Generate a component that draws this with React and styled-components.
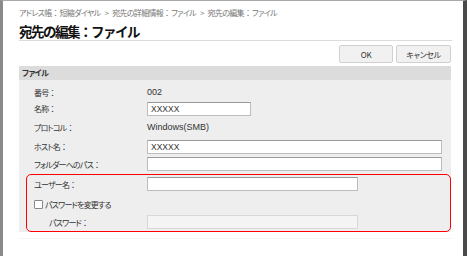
import React from 'react';
import styled, { createGlobalStyle } from 'styled-components';

const GlobalStyle = createGlobalStyle`
  body {
    margin: 0;
    background: #fff;
    font-family: "Noto Sans CJK JP", "Liberation Sans", sans-serif;
    color: #333;
  }
`;

const Frame = styled.div`
  position: relative;
  width: 467px;
  height: 256px;
  box-sizing: border-box;
  border-top: 1px solid #a8a8a8;
  border-left: 3px solid #8a8a8a;
  border-right: 4px solid #4a4a4a;
  overflow: hidden;
  background: #fff;
`;

const Fade = styled.div`
  position: absolute;
  left: -3px;
  right: -4px;
  bottom: 0;
  height: 22px;
  background: linear-gradient(rgba(255, 255, 255, 0), #fff);
  pointer-events: none;
`;

const Main = styled.div`
  width: 433px;
  margin-left: 16px;
  padding-top: 6px;
`;

const Crumbs = styled.div`
  height: 12px;
  line-height: 12px;
  font-size: 8px;
  font-feature-settings: "palt";
  letter-spacing: -0.7px;
  color: #777;
  white-space: nowrap;
`;

const Sep = styled.span`
  margin: 0 4px;
`;

const Colon = styled.span`
  font-feature-settings: normal;
  letter-spacing: 0;
`;

const Title = styled.h1`
  margin: 3px 0 0;
  height: 18px;
  line-height: 18px;
  font-size: 13.5px;
  font-weight: bold;
  letter-spacing: -1.5px;
  color: #111;
  border-bottom: 1px solid #dcdcdc;
`;

const Actions = styled.div`
  display: flex;
  justify-content: flex-end;
  gap: 3px;
  margin-top: 4px;
  padding-right: 1px;
`;

const Button = styled.button`
  width: ${(p) => p.$w}px;
  height: 18px;
  padding: 0;
  border: 1px solid #d0d0d0;
  border-radius: 2px;
  background: #f1f1f1;
  font-family: inherit;
  font-size: 8px;
  font-feature-settings: "palt";
  letter-spacing: -0.4px;
  color: #333;
`;

const Panel = styled.section`
  margin-top: 3px;
  width: 432px;
  background: #eeeeee;
`;

const PanelHead = styled.div`
  height: 14px;
  line-height: 14px;
  padding-left: 3px;
  background: #dcdcdc;
  font-size: 8px;
  font-weight: bold;
  font-feature-settings: "palt";
  letter-spacing: -0.5px;
  color: #333;
`;

const PanelBody = styled.div`
  padding-top: 3px;
`;

const Row = styled.div`
  display: flex;
  align-items: center;
  height: ${(p) => p.$h}px;
  padding-left: ${(p) => p.$pl ?? 15}px;
`;

const Label = styled.div`
  width: ${(p) => p.$w ?? 113}px;
  padding-left: ${(p) => p.$indent ?? 0}px;
  box-sizing: border-box;
  font-size: 8px;
  font-feature-settings: "palt";
  letter-spacing: -0.8px;
  color: #333;
  white-space: nowrap;
`;

const Value = styled.div`
  font-family: "Liberation Sans", sans-serif;
  font-size: 9px;
  color: #333;
`;

const Input = styled.div`
  width: ${(p) => p.$w}px;
  height: 14px;
  box-sizing: border-box;
  border: 1px solid #bdbdbd;
  border-top-color: #9a9a9a;
  background: ${(p) => (p.$disabled ? '#f4f4f4' : '#fff')};
  ${(p) => p.$disabled && 'border-color: #d8d8d8;'}
  padding-left: 3px;
  font-family: "Liberation Sans", sans-serif;
  font-size: 8.5px;
  line-height: 12px;
  color: #333;
`;

const Highlight = styled.div`
  margin: 1px 0 0 7px;
  border: 1.5px solid #f00;
  border-radius: 5px;
  padding: 0 0 2px;
`;

const CheckLabel = styled.label`
  display: flex;
  align-items: center;
  font-size: 8px;
  font-feature-settings: "palt";
  letter-spacing: -0.8px;
  color: #333;
  white-space: nowrap;
`;

const Box = styled.span`
  width: 7px;
  height: 7px;
  border: 1px solid #888;
  border-radius: 1px;
  background: #fff;
  margin-right: 2px;
`;

const Footer = styled.div`
  margin-top: 6px;
  border-top: 1px solid #f2f2f2;
  padding: 6px 0 0 3px;
`;

const TopIcon = () => (
  <svg width="8" height="7" viewBox="0 0 8 7">
    <path d="M0.5 0.75H7.5" stroke="#b0b0b0" strokeWidth="1" />
    <path d="M4 2L7.5 6H0.5Z" fill="#b0b0b0" />
  </svg>
);

const Field = ({ children, indent }) => (
  <Label $indent={indent}>
    {children}
    <Colon>：</Colon>
  </Label>
);

export default function App() {
  return (
    <>
      <GlobalStyle />
      <Frame>
        <Main>
          <Crumbs>
            アドレス帳<Colon>：</Colon>短縮ダイヤル<Sep>&gt;</Sep>宛先の詳細情報<Colon>：</Colon>ファイル
            <Sep>&gt;</Sep>宛先の編集<Colon>：</Colon>ファイル
          </Crumbs>
          <Title>宛先の編集：ファイル</Title>
          <Actions>
            <Button $w={54}>OK</Button>
            <Button $w={55}>キャンセル</Button>
          </Actions>
          <Panel>
            <PanelHead>ファイル</PanelHead>
            <PanelBody>
              <Row $h={18}>
                <Field>番号</Field>
                <Value>002</Value>
              </Row>
              <Row $h={15}>
                <Field>名称</Field>
                <Input $w={104}>XXXXX</Input>
              </Row>
              <Row $h={22}>
                <Field>プロトコル</Field>
                <Value>Windows(SMB)</Value>
              </Row>
              <Row $h={17}>
                <Field>ホスト名</Field>
                <Input $w={295}>XXXXX</Input>
              </Row>
              <Row $h={18}>
                <Field>フォルダーへのパス</Field>
                <Input $w={295} />
              </Row>
              <Highlight>
                <Row $h={18} $pl={7}>
                  <Field>ユーザー名</Field>
                  <Input $w={211} />
                </Row>
                <Row $h={22} $pl={7}>
                  <CheckLabel>
                    <Box />
                    パスワードを変更する
                  </CheckLabel>
                </Row>
                <Row $h={14} $pl={7}>
                  <Field indent={15}>パスワード</Field>
                  <Input $w={211} $disabled />
                </Row>
              </Highlight>
            </PanelBody>
          </Panel>
          <Footer>
            <TopIcon />
          </Footer>
        </Main>
        <Fade />
      </Frame>
    </>
  );
}
